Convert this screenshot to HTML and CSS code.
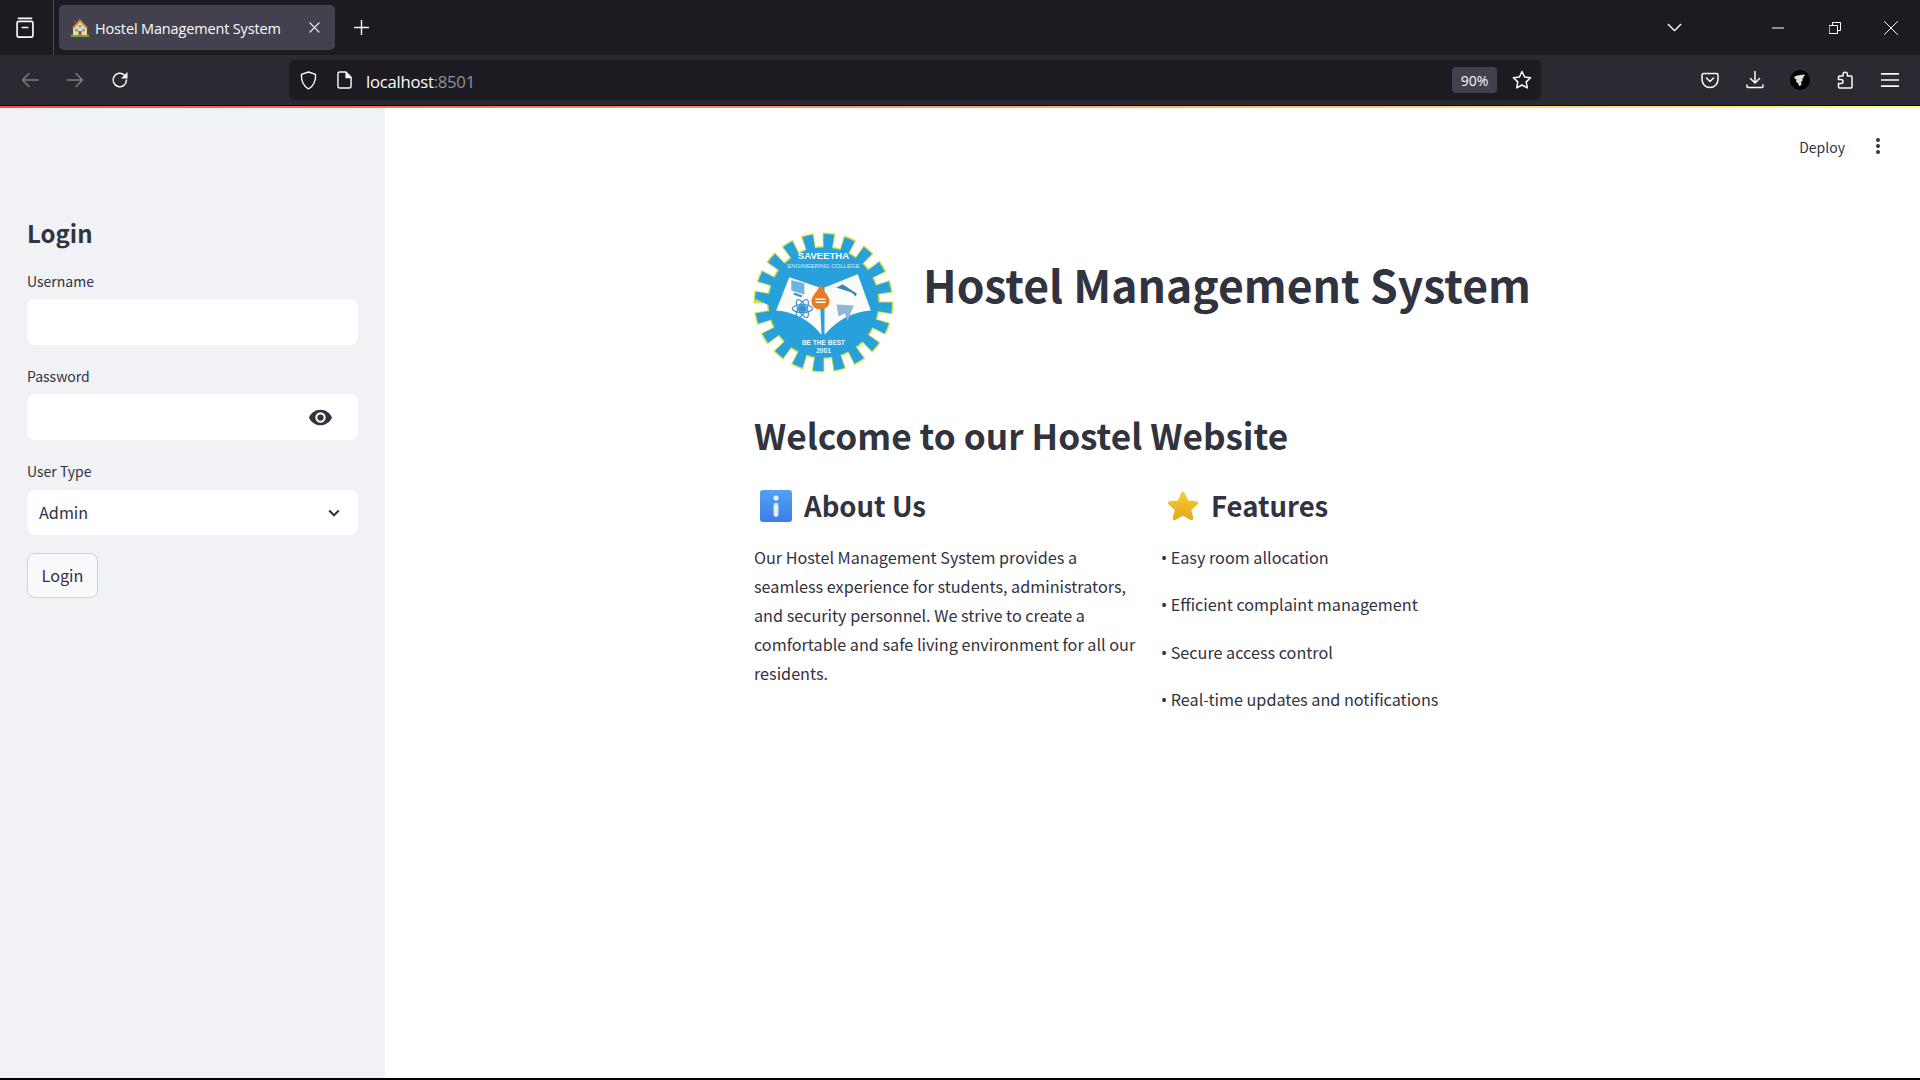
FILE: index.html
```html
<!DOCTYPE html>
<html lang="en">
<head>
<meta charset="utf-8">
<title>Hostel Management System</title>
<link rel="stylesheet" href="styles.css">
</head>
<body>
<div class="browser">
  <header class="tabbar">
    <svg class="ic view" viewBox="0 0 20 20"><path d="M4 1.2h12M2.8 5.5a1.5 1.5 0 0 1 1.5-1.5h11.4a1.5 1.5 0 0 1 1.5 1.5v11a1.8 1.8 0 0 1-1.8 1.8H4.6a1.8 1.8 0 0 1-1.8-1.8z" /><path d="M7.5 9.5h5" /></svg>
    <div class="tab-sep"></div>
    <div class="tab">
      <svg class="favicon" viewBox="0 0 18 18"><path fill="#6fa34a" d="M0 15.500h18V18H0z"/><path fill="#f3d9a0" d="M2 9l7-7 7 7v7H2z"/><path fill="#d08a3c" d="M9 0L1 9l1.500 1L9 3l6.500 7 1.500-1z"/><path fill="#a03a2a" d="M3 1h2v3H3z"/><path fill="#5aa7e8" d="M4 10h3v2.500H4zM11 10h3v2.500h-3zM7.500 6h3v2.500h-3z"/><path fill="#8a5a3a" d="M7.500 12h3v4h-3z"/></svg>
      <span class="tab-title">Hostel Management System</span>
      <svg class="ic tab-close" viewBox="0 0 12 12"><path d="M1 1l10 10M11 1L1 11"/></svg>
    </div>
    <svg class="ic newtab" viewBox="0 0 16 16"><path d="M8 .5v15M.5 8h15"/></svg>
    <div class="grow"></div>
    <svg class="ic tablist" viewBox="0 0 16 10"><path d="M1 1.500l7 7 7-7"/></svg>
    <svg class="ic win-min" viewBox="0 0 12 2"><path d="M0 1h12"/></svg>
    <svg class="ic win-max" viewBox="0 0 12 12"><path d="M.5 3.500h8v8h-8zM3.500 3.500v-3h8v8h-3"/></svg>
    <svg class="ic win-close" viewBox="0 0 14 14"><path d="M.5.500l13 13M13.500.500l-13 13"/></svg>
  </header>

  <nav class="toolbar">
    <svg class="ic nav dim" viewBox="0 0 18 16"><path d="M17 8H1.500M8 1.500L1.500 8 8 14.500"/></svg>
    <svg class="ic nav dim" viewBox="0 0 18 16"><path d="M1 8h15.500M10 1.500L16.500 8 10 14.500"/></svg>
    <svg class="ic nav" viewBox="0 0 18 18"><path d="M15.500 9a6.700 6.700 0 1 1-2-4.800L15.500 6"/><path class="solid" d="M16.500 1v6.500H10z"/></svg>
    <div class="urlbar">
      <svg class="ic shield" viewBox="0 0 18 20"><path d="M9 1l7.500 2.500c.3 7-1.500 12-7.500 15.500C3 15.500 1.200 10.500 1.500 3.500z"/></svg>
      <svg class="ic pageicon" viewBox="0 0 16 19"><path d="M3 1h6.500L15 6.500V16a2 2 0 0 1-2 2H3a2 2 0 0 1-2-2V3a2 2 0 0 1 2-2z"/><path class="solid" d="M9 1h1l5 5v1.500H9z"/></svg>
      <span class="url">localhost<span class="url-port">:8501</span></span>
      <div class="grow"></div>
      <span class="zoom">90%</span>
      <svg class="ic star" viewBox="0 0 20 20"><path d="M10 1.500l2.600 5.500 6 .8-4.400 4.100 1.100 6L10 15l-5.300 2.900 1.100-6L1.400 7.800l6-.8z"/></svg>
    </div>
    <div class="tools">
      <svg class="ic tool" viewBox="0 0 18 18"><path d="M2.500 2.500h13a1.500 1.500 0 0 1 1.500 1.500v4.500a8 8 0 0 1-16 0V4a1.500 1.500 0 0 1 1.500-1.500z"/><path d="M5.500 7l3.500 3.500L12.500 7"/></svg>
      <svg class="ic tool" viewBox="0 0 18 18"><path d="M9 .5v11M4.500 7.500L9 12l4.500-4.500M1 14v1.500a1 1 0 0 0 1 1h14a1 1 0 0 0 1-1V14"/></svg>
      <svg class="avatar" viewBox="0 0 20 20"><circle cx="10" cy="10" r="10" fill="#000"/><path fill="#ddd" d="M4.500 6.500l3-1L14 4.500l1 1-2 1.500 1 .5-2 1.500 1 1-2 2 .5 3-2.500 1-1-3-2-1 .5-2.500-2-1z"/></svg>
      <svg class="ic tool" viewBox="0 0 18 18"><path d="M7 3.500a2.200 2.200 0 0 1 4.400 0V5H15a1 1 0 0 1 1 1v10a1 1 0 0 1-1 1H3.500a1 1 0 0 1-1-1v-3.500H5a2 2 0 0 0 0-4H2.500V6a1 1 0 0 1 1-1H7z"/></svg>
      <svg class="ic tool" viewBox="0 0 16 14"><path d="M.5 1.500h15M.5 7h15M.5 12.500h15"/></svg>
    </div>
  </nav>

  <div class="rule"></div>

  <div class="page">
    <aside class="sidebar">
      <h2 class="side-title">Login</h2>
      <label class="field-label">Username</label>
      <div class="field"></div>
      <label class="field-label">Password</label>
      <div class="field field-pass">
        <svg class="eye" viewBox="0 0 24 24"><path d="M12 4.500C7 4.500 2.730 7.610 1 12c1.730 4.390 6 7.500 11 7.500s9.270-3.110 11-7.500c-1.730-4.390-6-7.500-11-7.500zM12 17a5 5 0 1 1 0-10 5 5 0 0 1 0 10zm0-8a3 3 0 1 0 0 6 3 3 0 0 0 0-6z"/></svg>
      </div>
      <label class="field-label field-label-type">User Type</label>
      <div class="field field-select">
        <span class="select-value">Admin</span>
        <svg class="chev" viewBox="0 0 12 8"><path d="M1.200 1.500L6 6.300l4.800-4.800"/></svg>
      </div>
      <button class="login-btn">Login</button>
    </aside>

    <main class="main">
      <div class="app-head">
        <span class="deploy">Deploy</span>
        <svg class="kebab" viewBox="0 0 6 20"><circle cx="3" cy="4" r="2"/><circle cx="3" cy="10" r="2"/><circle cx="3" cy="16" r="2"/></svg>
      </div>
      <div class="content">
        <div class="title-row">
          <svg class="logo" viewBox="0 0 140 140">
            <circle cx="70" cy="70" r="60" fill="none" stroke="#cfe24a" stroke-width="19" pathLength="40" stroke-dasharray="1.180 .820" stroke-dashoffset=".09"/>
            <circle cx="70" cy="70" r="56" fill="#cfe24a"/>
            <circle cx="70" cy="70" r="60" fill="none" stroke="#27a0dc" stroke-width="16" pathLength="40" stroke-dasharray="1 1"/>
            <circle cx="70" cy="70" r="54.500" fill="#27a0dc"/>
            <path fill="#fbfcf8" d="M36 45l30 10 2 47q-18-22-45-24zM71 55l33-13 13 36q-27 2-46 24z"/>
            <path fill="#6fb3e2" d="M38 48l13 3v11l-13-4z"/>
            <path fill="#3a93d0" d="M41 60l8 3-1 2-8-3z"/>
            <circle cx="49" cy="76" r="3.500" fill="#3a93d0"/>
            <g fill="none" stroke="#3a93d0" stroke-width="1.200"><ellipse cx="49" cy="76" rx="10" ry="4"/><ellipse cx="49" cy="76" rx="10" ry="4" transform="rotate(60 49 76)"/><ellipse cx="49" cy="76" rx="10" ry="4" transform="rotate(120 49 76)"/></g>
            <path fill="#3c86bb" d="M76 53l22 7 4 4 1-3-14-9-6 3z"/>
            <path fill="#8fb7d6" d="M83 72l17 1-6 15-3-7-6 3z"/>
            <path fill="#ea7a24" d="M67 52c3 7 9 12 9 17a9 8 0 0 1-18 0c0-5 6-10 9-17z"/>
            <path fill="#fff" d="M62 66h10v1.500H62zM62 69h10v1.500H62z"/>
            <text class="logo-a" x="70" y="27">SAVEETHA</text>
            <text class="logo-b" x="70" y="36">ENGINEERING COLLEGE</text>
            <text class="logo-c" x="70" y="112">BE THE BEST</text>
            <text class="logo-c" x="70" y="120">2001</text>
          </svg>
          <h1 class="title">Hostel Management System</h1>
        </div>
        <h2 class="welcome">Welcome to our Hostel Website</h2>
        <div class="cols">
          <section class="col">
            <h3 class="sub">
              <svg class="emoji" viewBox="0 0 32 32"><defs><linearGradient id="ib" x1="0" y1="0" x2="0" y2="1"><stop offset="0" stop-color="#52a2f5"/><stop offset="1" stop-color="#3b7de8"/></linearGradient></defs><rect width="32" height="32" rx="3" fill="url(#ib)"/><circle cx="16" cy="8" r="2.600" fill="#e8ecff"/><rect x="13.600" y="13" width="4.800" height="14" rx="2.400" fill="#e8ecff"/></svg>
              About Us
            </h3>
            <p class="about">Our Hostel Management System provides a seamless experience for students, administrators, and security personnel. We strive to create a comfortable and safe living environment for all our residents.</p>
          </section>
          <section class="col">
            <h3 class="sub">
              <svg class="emoji" viewBox="0 0 34 32"><defs><linearGradient id="sb" x1="0" y1="0" x2="0" y2="1"><stop offset="0" stop-color="#f8c932"/><stop offset="1" stop-color="#e2ac1c"/></linearGradient></defs><path fill="url(#sb)" stroke="url(#sb)" stroke-width="4" stroke-linejoin="round" d="M17 3l4 9 10 1-7.500 6.500L26 29l-9-5-9 5 2.500-9.500L3 13l10-1z"/></svg>
              Features
            </h3>
            <p class="feat"><span class="dot">•</span> Easy room allocation</p>
            <p class="feat"><span class="dot">•</span> Efficient complaint management</p>
            <p class="feat"><span class="dot">•</span> Secure access control</p>
            <p class="feat"><span class="dot">•</span> Real-time updates and notifications</p>
          </section>
        </div>
      </div>
    </main>
  </div>
  <div class="bottom"></div>
</div>
</body>
</html>
```

FILE: styles.css
```css
* { box-sizing: border-box; }
html, body { margin: 0; height: 100%; overflow: hidden; background: #000; }
body { font-family: "Noto Sans CJK SC", "Noto Sans", sans-serif; color: #31333f; }
h1, h2, h3, p { margin: 0; }

.browser { display: flex; flex-direction: column; width: 1920px; height: 1080px; }
.grow { flex: 1; }

.ic { fill: none; stroke: #fbfbfe; stroke-width: 1.500; stroke-linecap: round; stroke-linejoin: round; flex: none; display: block; }
.ic .solid { fill: #fbfbfe; stroke: none; }

.tabbar { height: 55px; flex: none; background: #1c1b22; display: flex; align-items: center; }
.view { width: 22px; height: 22px; margin-left: 14px; }
.tab-sep { width: 1px; height: 55px; background: #4a4953; margin-left: 17px; }
.tab { width: 276px; height: 45px; margin-left: 5px; background: #42414d; border-radius: 5px; display: flex; align-items: center; padding-left: 12px; color: #fbfbfe; }
.favicon { width: 18px; height: 18px; flex: none; }
.tab-title { margin: 2px 0 0 6px; width: 211px; white-space: nowrap; font-family: "Open Sans", sans-serif; font-size: 14.500px; letter-spacing: -.15px; }
.tab-close { width: 11px; height: 11px; stroke-width: 1.300; margin-left: 3px; }
.newtab { width: 15px; height: 15px; margin-left: 19px; }
.tablist { width: 15px; height: 9px; margin-right: 90px; }
.win-min { width: 12px; height: 2px; stroke-width: 1; margin-right: 45px; }
.win-max { width: 12px; height: 12px; stroke-width: 1; margin-right: 43px; }
.win-close { width: 14px; height: 14px; stroke-width: 1; margin-right: 22px; }

.toolbar { height: 50px; flex: none; background: #2b2a33; display: flex; align-items: center; padding-left: 21px; }
.nav { width: 18px; height: 18px; margin-right: 27px; }
.nav:nth-of-type(3) { margin-right: 0; }
.dim { opacity: .4; }
.urlbar { width: 1252px; height: 40px; margin-left: 160px; background: #1c1b22; border-radius: 5px; display: flex; align-items: center; padding-left: 11px; }
.shield { width: 17px; height: 19px; }
.pageicon { width: 15px; height: 18px; margin-left: 20px; }
.url { margin: 2px 0 0 14px; font: 16.700px "Open Sans", sans-serif; letter-spacing: -.25px; color: #fbfbfe; }
.url-port { color: #8f8f9d; }
.zoom { width: 45px; height: 26px; background: #42414d; border-radius: 4px; color: #fbfbfe; font: 14px/28px "Open Sans", sans-serif; text-align: center; }
.star { width: 20px; height: 20px; margin: 0 9px 0 15px; }
.tools { display: flex; align-items: center; margin-left: 160px; gap: 27px; }
.tool { width: 18px; height: 18px; }
.avatar { width: 20px; height: 20px; flex: none; margin: 0 -1px; }

.rule { height: 3px; flex: none; border-top: 1px solid #0b0a10; background: linear-gradient(90deg, #ff4b4b, #fffd80); }

.page { flex: 1; display: flex; min-height: 0; }
.bottom { height: 2px; flex: none; background: #000; }

.sidebar { width: 385px; flex: none; background: #f0f2f6; padding: 110px 27px 0 27px; display: flex; flex-direction: column; }
.side-title { font-size: 24px; line-height: 30px; font-weight: 600; height: 30px; margin-bottom: 23px; }
.field-label { font-size: 14px; line-height: 20px; margin-bottom: 8px; }
.field-label-type { margin-bottom: 9px; }
.field { height: 46px; background: #fff; border-radius: 8px; margin-bottom: 21px; display: flex; align-items: center; justify-content: flex-end; }
.field-pass { padding-right: 25px; }
.eye { width: 25px; height: 25px; fill: #31333f; }
.field-select { margin-bottom: 18px; padding: 0 18px 0 12px; justify-content: space-between; font-size: 16.200px; height: 45px; }
.select-value { margin-top: -2px; }
.chev { width: 12px; height: 8px; fill: none; stroke: #31333f; stroke-width: 2; }
.login-btn { width: 71px; height: 45px; border: 1px solid #d0d2d9; border-radius: 8px; background: #f9f9fb; font: 16.200px "Noto Sans CJK SC", sans-serif; color: #31333f; padding: 0 0 2px; }

.main { flex: 1; background: #fff; display: flex; flex-direction: column; min-width: 0; }
.app-head { height: 50px; display: flex; align-items: center; justify-content: flex-end; padding: 27px 39px 0 0; }
.deploy { font-size: 14px; margin-right: 30px; }
.kebab { width: 6px; height: 20px; fill: #31333f; margin-top: -2px; }

.content { padding: 74px 0 0 368px; }
.title-row { display: flex; align-items: flex-start; }
.logo { width: 141px; height: 141px; flex: none; }
.logo-a { font: 700 9.500px "Liberation Sans", sans-serif; fill: #fff; text-anchor: middle; }
.logo-b { font: 400 6px "Liberation Sans", sans-serif; fill: #d7eefa; text-anchor: middle; }
.logo-c { font: 700 6.500px "Liberation Sans", sans-serif; fill: #eef8fd; text-anchor: middle; }
.title { font-size: 44.500px; line-height: 60px; font-weight: 700; margin: 22px 0 0 29px; white-space: nowrap; }
.welcome { font-size: 35.200px; line-height: 50px; font-weight: 600; margin: 37px 0 0 1px; }
.cols { display: grid; grid-template-columns: 391px 391px; column-gap: 16px; margin: 23px 0 0 1px; }
.sub { font-size: 27.500px; line-height: 44px; font-weight: 600; display: flex; align-items: center; gap: 12px; padding-left: 6px; }
.emoji { width: 32px; height: 32px; flex: none; margin-top: 1px; }
.about { font-size: 16.200px; line-height: 29px; margin-top: 16px; }
.feat { font-size: 16.200px; line-height: 29px; margin-bottom: 17.400px; }
.feat:first-of-type { margin-top: 16px; }
.dot { font-family: "Noto Sans", sans-serif; }
```
